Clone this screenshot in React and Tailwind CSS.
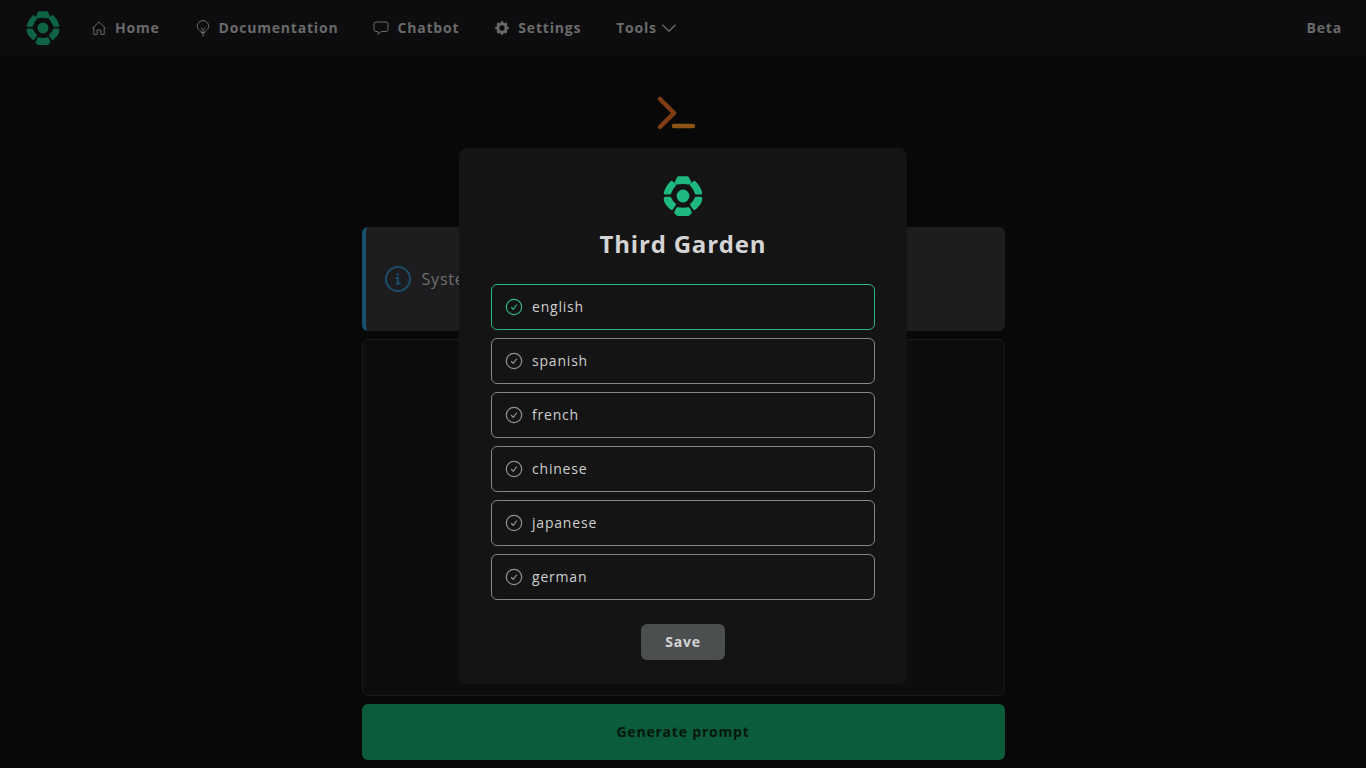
import { useState } from "react";

const languages = [
  "english",
  "spanish",
  "french",
  "chinese",
  "japanese",
  "german",
];

function Logo({ className }) {
  return (
    <svg
      viewBox="0 0 40 40"
      className={className}
      fill="currentColor"
      stroke="currentColor"
      strokeWidth="3"
      strokeLinejoin="round"
      aria-hidden="true"
    >
      <circle cx="20" cy="20" r="6.4" stroke="none" />
      <path d="M15.500 1.800h9l2.300 4.700l-.6 .6q-6.200 -1.400 -12.400 0l-.6 -.6z" />
      <path d="M14.600 32.800q5.400 .8 10.800 0l1.900 3.700l-2 2H14.700l-2 -2z" />
      <path d="M8.700 6.300l2.900 2.500q-3.700 3.500 -4.800 8.200H2.300q1.500 -6 6.400 -10.700z" />
      <path d="M31.300 6.300l-2.900 2.500q3.700 3.500 4.800 8.200h4.500q-1.500 -6 -6.400 -10.700z" />
      <path d="M2.300 22.200h4.600q1.400 3.800 4.500 6.300l-2.600 4q-5.200 -4 -6.500 -8.500z" />
      <path d="M37.700 22.200h-4.600q-1.400 3.800 -4.500 6.300l2.600 4q5.200 -4 6.500 -8.500z" />
    </svg>
  );
}

function Icon({ children }) {
  return (
    <svg
      viewBox="0 0 16 16"
      className="size-4 shrink-0"
      fill="none"
      stroke="currentColor"
      strokeLinejoin="round"
      aria-hidden="true"
    >
      {children}
    </svg>
  );
}

function HomeIcon() {
  return (
    <Icon>
      <path d="M1.500 8.300L8 1.800l6.500 6.500M2.800 7.200v7.200h3.400V10h3.600v4.400h3.400V7.200" />
    </Icon>
  );
}

function BulbIcon() {
  return (
    <Icon>
      <path d="M6.300 12.500v-1C4 10.400 2.300 8.700 2.300 6.300a5.700 5.700 0 0 1 11.400 0c0 2.400 -1.700 4.100 -4 5.200v1z" />
      <path d="M5.800 7.700L8 9.500l2.200 -1.800M8 9.500v2.800M6.300 13.300h3.400M7 15.300h2" />
    </Icon>
  );
}

function ChatIcon() {
  return (
    <Icon>
      <path d="M3 2h10q2 0 2 2v5.500q0 2 -2 2H8.200L5 14.500v-3H3q-2 0 -2 -2V4q0 -2 2 -2z" />
    </Icon>
  );
}

function GearIcon() {
  return (
    <Icon>
      <circle cx="8" cy="8" r="4.100" strokeWidth="2.800" />
      <path
        d="M8 1.300v2M8 12.700v2M1.300 8h2M12.700 8h2M3.260 3.260l1.400 1.400M11.340 11.340l1.400 1.400M3.260 12.740l1.400 -1.400M11.340 4.660l1.400 -1.400"
        strokeWidth="2.600"
      />
    </Icon>
  );
}

function ChevronIcon() {
  return (
    <Icon>
      <path d="M1.500 4.800L8 11.300l6.500 -6.500" strokeWidth="1.300" />
    </Icon>
  );
}

function CheckIcon() {
  return (
    <svg
      viewBox="0 0 20 20"
      className="size-5 shrink-0 text-[#929292] group-has-checked:text-[#2bb583]"
      fill="none"
      stroke="currentColor"
      strokeWidth="1.200"
      strokeLinecap="round"
      aria-hidden="true"
    >
      <circle cx="10" cy="10" r="7.700" />
      <path d="M7.500 10.500l1.800 1.800L12.500 8" />
    </svg>
  );
}

const navLinks = [
  { label: "Home", icon: <HomeIcon /> },
  { label: "Documentation", icon: <BulbIcon /> },
  { label: "Chatbot", icon: <ChatIcon /> },
  { label: "Settings", icon: <GearIcon /> },
];

function Navbar() {
  return (
    <header className="flex h-14 items-center bg-[#0d0d0f] px-6 text-sm font-bold text-[#6a6a6a]">
      <a href="#home" aria-label="Third Garden">
        <Logo className="h-[34px] w-[38px] text-[#0f6444]" />
      </a>
      <nav className="ml-[29px] flex items-center gap-[35px]">
        {navLinks.map(({ label, icon }) => (
          <a
            key={label}
            href={`#${label.toLowerCase()}`}
            className="flex items-center gap-2"
          >
            {icon}
            {label}
          </a>
        ))}
        <button type="button" className="flex items-center gap-1">
          Tools
          <ChevronIcon />
        </button>
      </nav>
      <span className="ml-auto">Beta</span>
    </header>
  );
}

function PromptForm() {
  return (
    <main className="mx-auto flex w-full max-w-[643px] flex-col gap-2 pt-9 pb-2">
      <svg
        viewBox="0 0 52 40"
        className="mx-auto mb-[87px] h-10 w-[52px]"
        fill="none"
        strokeWidth="4.500"
        strokeLinecap="round"
        strokeLinejoin="round"
        aria-hidden="true"
      >
        <path d="M3 7l14 14L3 35" stroke="#803d14" />
        <path d="M17 34h19" stroke="#8b5314" />
      </svg>
      <div className="flex h-[104px] items-center gap-[10px] rounded-md border-l-4 border-[#164f72] bg-[#1d1d1f] px-[18px] text-base text-[#6f6f6f]">
        <svg
          viewBox="0 0 28 28"
          className="size-7 text-[#1b4d6b]"
          fill="none"
          stroke="currentColor"
          strokeWidth="2"
          aria-hidden="true"
        >
          <circle cx="14" cy="14" r="12" />
          <path d="M11.500 13h2.500v5.500M11.500 18.500h5M12.500 9.500h2.500" />
        </svg>
        System
      </div>
      <textarea
        aria-label="Prompt"
        className="h-[357px] resize-none rounded-md border border-[#1a1a1d] bg-[#0d0d10] p-4"
      />
      <button
        type="button"
        className="h-14 rounded-md bg-[#0b5c3b] text-sm font-bold text-[#04150d]"
      >
        Generate prompt
      </button>
    </main>
  );
}

function LanguageDialog() {
  const [selected, setSelected] = useState("english");

  return (
    <div className="fixed inset-0 flex items-center justify-center pt-16">
      <form
        role="dialog"
        aria-labelledby="dialog-title"
        onSubmit={(e) => e.preventDefault()}
        className="flex w-full max-w-md flex-col items-center rounded-lg bg-[#141414] px-8 pt-7 pb-6"
      >
        <Logo className="size-10 text-[#1eb980]" />
        <h1
          id="dialog-title"
          className="mt-3 text-2xl font-bold text-[#d4d4d4]"
        >
          Third Garden
        </h1>
        <div className="mt-6 flex w-full flex-col gap-2">
          {languages.map((language) => (
            <label
              key={language}
              className="group flex h-[46px] items-center gap-2 rounded-md border border-[#858585] px-3 text-sm text-[#cfcfcf] has-checked:border-[#2bb583]"
            >
              <input
                type="radio"
                name="language"
                className="sr-only"
                checked={selected === language}
                onChange={() => setSelected(language)}
              />
              <CheckIcon />
              {language}
            </label>
          ))}
        </div>
        <button
          type="submit"
          className="mt-6 h-9 rounded-md bg-[#4b4f50] px-6 text-sm font-bold text-[#d4d4d4]"
        >
          Save
        </button>
      </form>
    </div>
  );
}

export default function App() {
  return (
    <div className="min-h-screen bg-[#080808] font-['Open_Sans',sans-serif] tracking-wider">
      <Navbar />
      <PromptForm />
      <LanguageDialog />
    </div>
  );
}
